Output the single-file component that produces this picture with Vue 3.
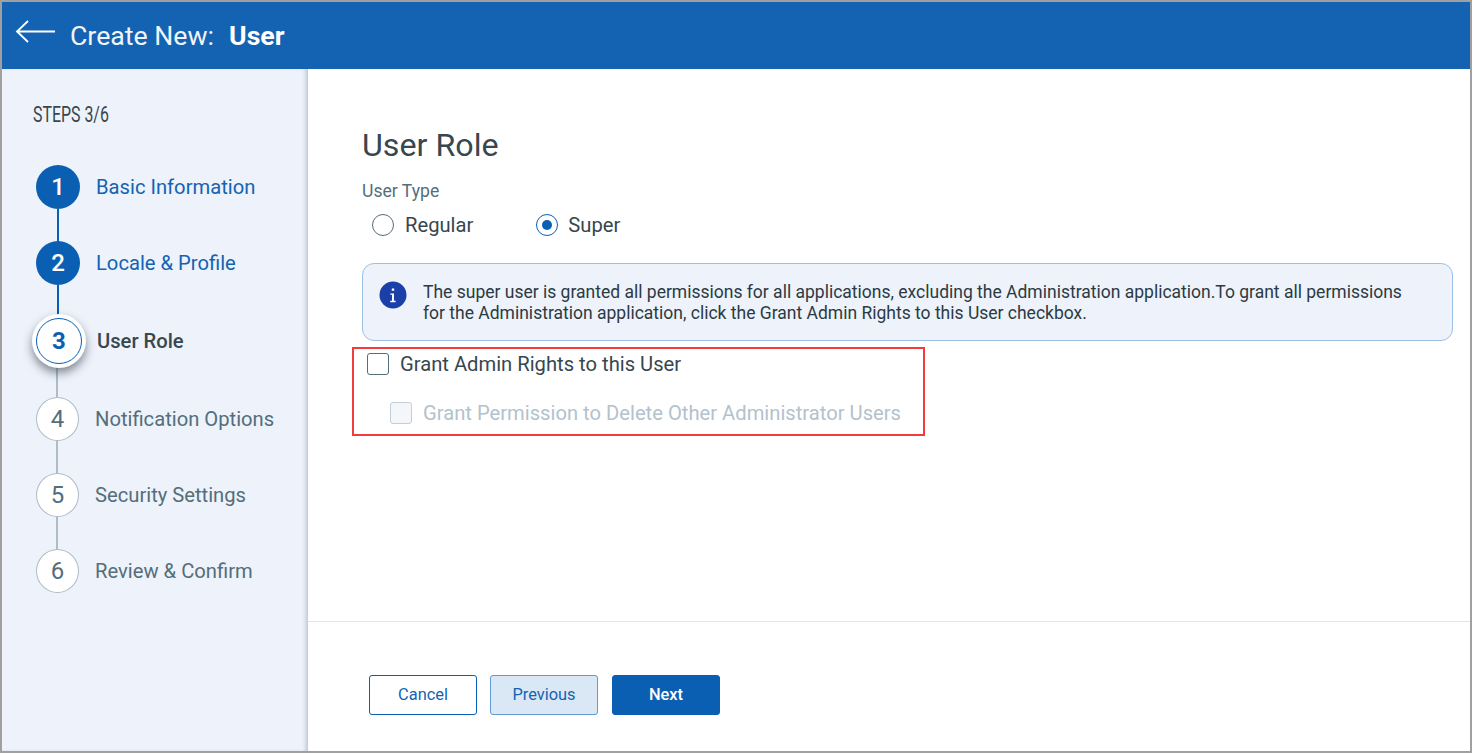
<template>
  <div class="frame">
    <header class="topbar">
      <svg class="back" width="40" height="26" viewBox="0 0 40 26" fill="none" stroke="#fff" stroke-width="1.8">
        <path d="M40 11.5H2M13 1 2 11.5 13 22" />
      </svg>
      <span class="title">Create New:</span>
      <b class="title-strong">User</b>
    </header>
    <div class="content">
      <aside class="sidebar">
        <div class="steps-label">STEPS 3/6</div>
        <ol class="steps">
          <li v-for="step in steps" :key="step.n" class="step" :class="step.state">
            <span class="dot">
              <span class="num">{{ step.n }}</span>
            </span>
            <span class="name">{{ step.name }}</span>
          </li>
        </ol>
      </aside>
      <main class="main">
        <section class="body">
          <h1>User Role</h1>
          <div class="field-label">User Type</div>
          <div class="radios">
            <label class="radio"><span class="circle"></span>Regular</label>
            <label class="radio on"><span class="circle"></span>Super</label>
          </div>
          <div class="info">
            <svg class="info-icon" width="28" height="28" viewBox="0 0 28 28">
              <circle cx="14" cy="14" r="13.5" fill="#1a3fa8" />
              <path d="M12.8 7.4h2.4v2.4h-2.4zM11.4 12.4h3.6v7.4h1.6v1.4h-5.4v-1.4h1.8v-6h-1.6z" fill="#fff" />
            </svg>
            <p>The super user is granted all permissions for all applications, excluding the Administration application.To grant all permissions for the Administration application, click the Grant Admin Rights to this User checkbox.</p>
          </div>
          <div class="highlight">
            <label class="check"><span class="box"></span>Grant Admin Rights to this User</label>
            <label class="check sub"><span class="box"></span>Grant Permission to Delete Other Administrator Users</label>
          </div>
        </section>
        <footer class="actions">
          <button class="btn outline">Cancel</button>
          <button class="btn soft">Previous</button>
          <button class="btn solid">Next</button>
        </footer>
      </main>
    </div>
  </div>
</template>

<script setup>
const steps = [
  { n: 1, name: 'Basic Information', state: 'done' },
  { n: 2, name: 'Locale & Profile', state: 'done' },
  { n: 3, name: 'User Role', state: 'current' },
  { n: 4, name: 'Notification Options', state: 'todo' },
  { n: 5, name: 'Security Settings', state: 'todo' },
  { n: 6, name: 'Review & Confirm', state: 'todo' }
]
</script>

<style>
html, body {
  margin: 0;
  background: #fff;
}
</style>

<style scoped>
.frame {
  box-sizing: border-box;
  width: 1472px;
  height: 753px;
  border: 2px solid #a0a0a0;
  display: flex;
  flex-direction: column;
  font-family: Roboto, "Liberation Sans", sans-serif;
  background: #fff;
  overflow: hidden;
}

.topbar {
  height: 67px;
  flex: none;
  background: #1463b2;
  color: #fff;
  display: flex;
  align-items: center;
  box-sizing: border-box;
  padding: 0 0 0 13px;
}

.back {
  margin: -6px 15px 0 0;
}

.title {
  font-size: 26.7px;
  color: #f1f4f9;
}

.title-strong {
  font-size: 26.7px;
  font-weight: 700;
  margin-left: 15px;
}

.content {
  flex: 1;
  display: flex;
  min-height: 0;
}

.sidebar {
  width: 306px;
  flex: none;
  box-sizing: border-box;
  background: #edf2fb;
  box-shadow: inset -4px 0 4px -2px #b9c3cc;
  padding: 33px 0 0 31px;
}

.steps-label {
  font-size: 21.5px;
  line-height: 26px;
  color: #37474f;
  transform: scaleX(0.74);
  transform-origin: left;
  white-space: nowrap;
}

.steps {
  list-style: none;
  margin: 21px 0 0;
  padding: 0;
}

.step {
  display: flex;
  align-items: center;
  height: 76px;
  font-size: 20.2px;
  position: relative;
}

.step.current {
  height: 80px;
}

.step:not(:last-child)::after {
  content: '';
  position: absolute;
  left: 23px;
  top: 60px;
  width: 2px;
  height: 36px;
  background: #aebcc5;
}

.step.done::after {
  left: 24px;
  background: #0b5fb3;
}

.dot {
  box-sizing: border-box;
  width: 44px;
  height: 44px;
  border-radius: 50%;
  margin-left: 3px;
  flex: none;
  display: flex;
  align-items: center;
  justify-content: center;
  font-size: 24px;
  position: relative;
  z-index: 1;
}

.name {
  margin-left: 16px;
  white-space: nowrap;
}

.done .dot {
  background: #0b5fb3;
  color: #fff;
  font-weight: 500;
}

.done .name {
  color: #1463b2;
}

.current .dot {
  width: 54px;
  height: 54px;
  margin-left: -1px;
  background: #fff;
  box-shadow: 0 5px 10px rgba(40, 50, 60, 0.55);
  color: #0b5fb3;
  font-weight: 700;
}

.current .dot::before {
  content: '';
  position: absolute;
  inset: 4px;
  border: 1px solid #0b5fb3;
  border-radius: 50%;
}

.current .name {
  color: #37474f;
  font-weight: 500;
  margin-left: 11px;
}

.todo .dot {
  width: 43px;
  background: #fff;
  border: 1px solid #aebcc5;
  color: #546e7a;
}

.todo .name {
  color: #546e7a;
}

.main {
  flex: 1;
  display: flex;
  flex-direction: column;
  min-width: 0;
}

.body {
  flex: 1;
  box-sizing: border-box;
  padding: 57px 17px 0 54px;
  border-bottom: 1px solid #dde5ee;
}

h1 {
  margin: 0;
  font-size: 32.2px;
  font-weight: 400;
  line-height: 38px;
  color: #37474f;
}

.field-label {
  margin-top: 16px;
  font-size: 17.6px;
  line-height: 22px;
  color: #546e7a;
}

.radios {
  display: flex;
  margin: 11px 0 0 10px;
}

.radio {
  display: flex;
  align-items: center;
  font-size: 20.2px;
  line-height: 24px;
  color: #37474f;
  margin-right: 63px;
}

.circle {
  box-sizing: border-box;
  width: 22px;
  height: 22px;
  border: 1px solid #546e7a;
  border-radius: 50%;
  margin-right: 11px;
  display: flex;
  align-items: center;
  justify-content: center;
  background: #fff;
}

.radio.on .circle {
  border-color: #0b5fb3;
  margin-right: 10px;
}

.radio.on .circle::after {
  content: '';
  width: 10px;
  height: 10px;
  border-radius: 50%;
  background: #0b5fb3;
}

.info {
  box-sizing: border-box;
  margin-top: 26px;
  height: 78px;
  display: flex;
  align-items: flex-start;
  background: #edf2fb;
  border: 1px solid #9cc0e4;
  border-radius: 12px;
  padding: 17px 40px 0 16px;
}

.info-icon {
  flex: none;
  margin-right: 16px;
}

.info p {
  margin: 1px 0 0;
  font-size: 17.5px;
  line-height: 21px;
  color: #2c3a42;
}

.highlight {
  box-sizing: border-box;
  width: 573px;
  height: 89px;
  margin: 6px 0 0 -10px;
  border: 2px solid #f23c3c;
  padding: 3px 0 0 13px;
}

.check {
  display: flex;
  align-items: center;
  font-size: 20.2px;
  line-height: 24px;
  color: #37474f;
}

.box {
  box-sizing: border-box;
  width: 22px;
  height: 22px;
  border: 1px solid #546e7a;
  border-radius: 3px;
  margin-right: 11px;
  background: #fff;
}

.check.sub {
  margin: 25px 0 0 23px;
  color: #b3c2cc;
}

.check.sub .box {
  border-color: #c3cfd8;
  background: #f4f6f9;
}

.actions {
  height: 129px;
  flex: none;
  display: flex;
  align-items: flex-start;
  gap: 13px;
  box-sizing: border-box;
  padding: 53px 0 0 61px;
}

.btn {
  box-sizing: border-box;
  width: 108px;
  height: 40px;
  border-radius: 3px;
  font-family: inherit;
  font-size: 16.4px;
  padding: 0 0 1px;
  border: 1px solid #0b5fb3;
  color: #1463b2;
  background: #fff;
}

.btn.soft {
  background: #dae7f5;
  border-color: #619ad2;
}

.btn.solid {
  background: #0b5fb3;
  color: #fff;
  font-weight: 500;
  margin-left: 1px;
}
</style>
